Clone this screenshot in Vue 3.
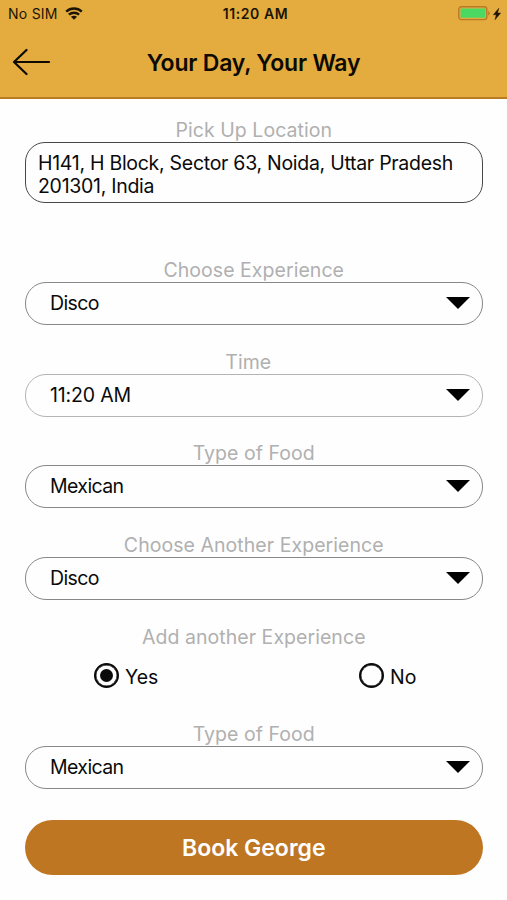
<script setup>
import { ref } from 'vue';

const address = ref('H141, H Block, Sector 63, Noida, Uttar Pradesh 201301, India');
const addAnother = ref('Yes');
const fields = ref([
  { label: 'Choose Experience', value: 'Disco' },
  { label: 'Time', value: '11:20 AM', time: true },
  { label: 'Type of Food', value: 'Mexican' },
  { label: 'Choose Another Experience', value: 'Disco' }
]);
const extraFood = ref('Mexican');
</script>

<template>
  <div class="screen">
    <header class="header">
      <div class="status-bar">
        <div class="carrier">
          <span>No SIM</span>
          <svg
            class="wifi"
            viewBox="0 0 18 13"
          >
            <path
              d="M1.2 4.7C5.6.5 12.4.5 16.8 4.7M3.9 7.7c2.9-2.7 7.3-2.7 10.2 0"
              fill="none"
              stroke="#1c1404"
              stroke-width="2.4"
            />
            <path
              d="M9 12.8 5.9 9.8c1.7-1.5 4.5-1.5 6.2 0z"
              fill="#1c1404"
            />
          </svg>
        </div>
        <span class="clock">11:20 AM</span>
        <div class="power">
          <svg
            class="battery"
            viewBox="0 0 33 15"
          >
            <rect
              x=".8"
              y=".8"
              width="28"
              height="12.8"
              rx="2.6"
              fill="none"
              stroke="#b87a26"
              stroke-width="1.4"
            />
            <rect
              x="2.6"
              y="2.6"
              width="24.6"
              height="9.2"
              rx=".8"
              fill="#4bd964"
            />
            <path
              d="M30.2 5c2 .6 2 4 0 4.6z"
              fill="#b87a26"
            />
          </svg>
          <svg
            class="bolt"
            viewBox="0 0 8 12"
          >
            <path
              d="M5.8.2.3 6.8h2.9L2 11.8 7.7 5H4.6z"
              fill="#1c1404"
              stroke="#1c1404"
              stroke-width=".4"
            />
          </svg>
        </div>
      </div>
      <div class="nav-bar">
        <svg
          class="back"
          viewBox="0 0 38 28"
        >
          <path
            d="M14.5 2 2 14l12.5 12M2 14h35"
            fill="none"
            stroke="#0d0a02"
            stroke-width="2.2"
            stroke-linecap="round"
            stroke-linejoin="round"
          />
        </svg>
        <h1>Your Day, Your Way</h1>
      </div>
    </header>

    <main class="form">
      <div class="field pickup">
        <label>Pick Up Location</label>
        <div class="address">{{ address }}</div>
      </div>

      <div
        v-for="field in fields"
        :key="field.label"
        class="field"
        :class="{ 'field-time': field.time }"
      >
        <label>{{ field.label }}</label>
        <div class="select">
          <span>{{ field.value }}</span>
          <svg
            class="caret"
            viewBox="0 0 24 12"
          ><path d="M0 0h24L12 12z" /></svg>
        </div>
      </div>

      <div class="field">
        <label>Add another Experience</label>
        <div class="radios">
          <div
            v-for="option in ['Yes', 'No']"
            :key="option"
            class="option"
            @click="addAnother = option"
          >
            <span class="radio"><i v-if="addAnother === option" /></span>
            <span class="option-text">{{ option }}</span>
          </div>
        </div>
      </div>

      <div class="field">
        <label>Type of Food</label>
        <div class="select">
          <span>{{ extraFood }}</span>
          <svg
            class="caret"
            viewBox="0 0 24 12"
          ><path d="M0 0h24L12 12z" /></svg>
        </div>
      </div>

      <button
        type="button"
        class="book"
      >
        Book George
      </button>
    </main>
  </div>
</template>

<style>
  body {
    margin: 0;
    background: #fefefe;
  }
</style>

<style scoped>
  .screen {
    width: 507px;
    height: 900px;
    overflow: hidden;
    background: #fefefe;
    color: #0a0a0a;
    font-family: Inter, "Liberation Sans", sans-serif;
  }
  .header {
    box-sizing: border-box;
    height: 99px;
    background: #e4ac3f;
    border-bottom: 2px solid #b97c20;
  }
  .status-bar {
    display: grid;
    grid-template-columns: 1fr auto 1fr;
    align-items: center;
    height: 27px;
    padding: 0 6px 0 8px;
    font-size: 14px;
    color: #1c1404;
  }
  .carrier {
    display: flex;
    align-items: center;
    gap: 7px;
    letter-spacing: 0.25px;
  }
  .wifi {
    width: 18px;
    height: 13px;
  }
  .clock {
    font-size: 14px;
    font-weight: 600;
    letter-spacing: 0.6px;
    padding-left: 2px;
  }
  .power {
    display: flex;
    align-items: center;
    justify-content: flex-end;
    gap: 2px;
  }
  .battery {
    width: 33px;
    height: 15px;
  }
  .bolt {
    width: 8px;
    height: 12px;
  }
  .nav-bar {
    display: grid;
    grid-template-columns: 38px 1fr 38px;
    align-items: center;
    height: 70px;
    padding: 0 12px;
  }
  .back {
    width: 38px;
    height: 28px;
  }
  h1 {
    margin: 0;
    padding-top: 1px;
    font-size: 23px;
    font-weight: 600;
    letter-spacing: -0.22px;
    text-align: center;
    color: #0d0a02;
  }
  .form {
    display: flex;
    flex-direction: column;
    gap: 24.6px;
    padding: 19px 24.5px 0 25px;
  }
  .pickup {
    margin-bottom: 30.7px;
  }
  label {
    display: block;
    font-size: 19.5px;
    line-height: 24px;
    letter-spacing: 0.05px;
    text-align: center;
    color: #b0b0b0;
  }
  .address {
    box-sizing: border-box;
    height: 61px;
    padding: 9px 12px 0;
    border: 1.5px solid #484848;
    border-radius: 20px;
    font-size: 19.5px;
    line-height: 23px;
    letter-spacing: -0.28px;
  }
  .select {
    box-sizing: border-box;
    display: flex;
    align-items: center;
    justify-content: space-between;
    height: 43px;
    padding: 0 12px 1px 24px;
    border: 1px solid #888;
    border-radius: 21px;
    font-size: 19.5px;
    letter-spacing: -0.6px;
  }
  .field-time label {
    padding-right: 11px;
  }
  .field-time .select {
    border-color: #b4b4b4;
    letter-spacing: -0.15px;
  }
  .caret {
    width: 24px;
    height: 12px;
  }
  .radios {
    display: grid;
    grid-template-columns: 265px 1fr;
    padding: 14px 0 8.5px 69px;
  }
  .option {
    display: flex;
    align-items: center;
    gap: 6px;
    height: 26px;
    font-size: 19.5px;
  }
  .option-text {
    padding-top: 2px;
  }
  .radio {
    box-sizing: border-box;
    display: flex;
    align-items: center;
    justify-content: center;
    width: 25px;
    height: 25px;
    border: 2px solid #0a0a0a;
    border-radius: 50%;
    box-shadow: inset 0 0 0 0.4px #0a0a0a;
  }
  .radio i {
    width: 13px;
    height: 13px;
    border-radius: 50%;
    background: #0a0a0a;
  }
  .book {
    height: 55px;
    margin-top: 6.4px;
    padding: 1px 0 0;
    border: 0;
    border-radius: 28px;
    background: #be7622;
    color: #fff;
    font-family: inherit;
    font-size: 23px;
    font-weight: 600;
  }
</style>
